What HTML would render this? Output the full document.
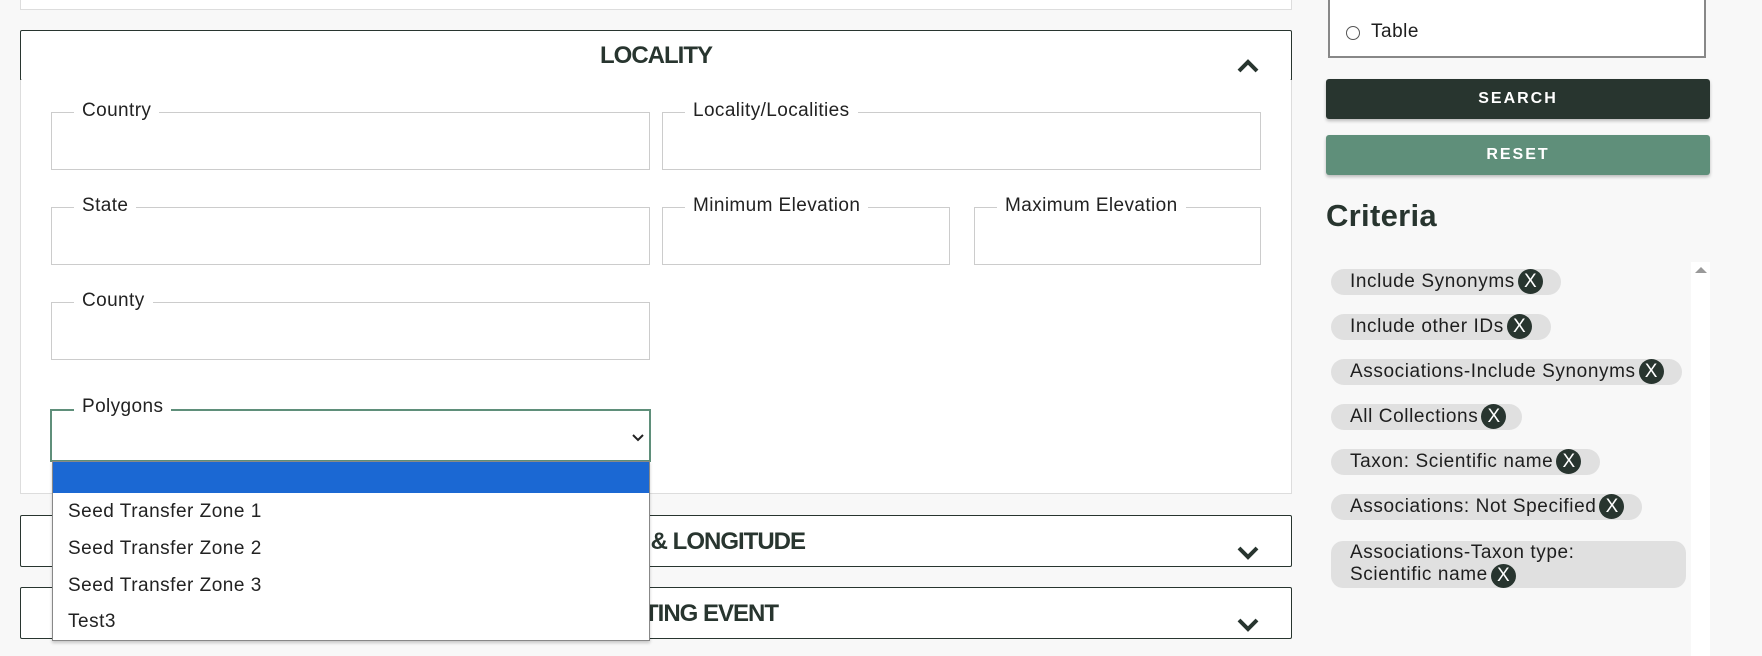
<!DOCTYPE html>
<html><head><style>
*{box-sizing:border-box;margin:0;padding:0}
body{width:1762px;height:656px;background:#f8f8f8;font-family:"Liberation Sans",sans-serif;color:#1e1e1e;position:relative;overflow:hidden}
.a{position:absolute}
.card{background:#fff;border:1px solid #ddd}
.hdr{background:#fff;border:1px solid #28352f;border-radius:2px}
.hdr .t{position:absolute;left:0;right:0;text-align:center;font-size:24px;font-weight:bold;color:#28352f;top:11px;letter-spacing:-1px}
.fs{position:absolute;border:1px solid #ccc;background:#fff}
.fs span{position:absolute;top:-13px;left:22px;background:#fff;padding:0 8px;font-size:19px;letter-spacing:0.4px;color:#222}
.chip{position:absolute;left:1331px;height:26px;background:#e0e0e0;border-radius:13px;font-size:19px;letter-spacing:0.6px;line-height:26px;padding-left:19px;color:#1e1e1e;white-space:nowrap}
.x{display:inline-block;width:25px;height:25px;border-radius:50%;background:#28352f;color:#fff;text-align:center;line-height:25px;font-size:19px;letter-spacing:0;vertical-align:top;margin-left:3px}
.btn{position:absolute;left:1326px;width:384px;height:40px;border-radius:3px;color:#fff;font-weight:bold;font-size:16px;letter-spacing:2px;text-align:center;line-height:40px;box-shadow:0 2px 3px rgba(0,0,0,.25)}
.opt{position:absolute;left:15px;font-size:19px;letter-spacing:0.5px;color:#222}
</style></head><body>
<div class="a card" style="left:20px;top:-5px;width:1272px;height:15px"></div>

<div class="a hdr" style="left:20px;top:30px;width:1272px;height:51px"><div class="t">LOCALITY</div>
<svg class="a" style="left:1216px;top:28px" width="22" height="14" viewBox="0 0 22 14"><path d="M2 12 L11 3 L20 12" stroke="#28352f" stroke-width="4" fill="none"/></svg></div>
<div class="a card" style="left:20px;top:80px;width:1272px;height:414px;border-top:none"></div>

<div class="fs" style="left:51px;top:112px;width:599px;height:58px"><span>Country</span></div>
<div class="fs" style="left:662px;top:112px;width:599px;height:58px"><span>Locality/Localities</span></div>
<div class="fs" style="left:51px;top:207px;width:599px;height:58px"><span>State</span></div>
<div class="fs" style="left:662px;top:207px;width:288px;height:58px"><span>Minimum Elevation</span></div>
<div class="fs" style="left:974px;top:207px;width:287px;height:58px"><span>Maximum Elevation</span></div>
<div class="fs" style="left:51px;top:302px;width:599px;height:58px"><span>County</span></div>
<div class="fs" style="left:50px;top:409px;width:601px;height:53px;border:2px solid #5f8f7a"><span style="top:-15px">Polygons</span>
<svg class="a" style="left:580px;top:23px" width="12" height="8" viewBox="0 0 12 8"><path d="M1 1 L6 6 L11 1" stroke="#222" stroke-width="2" fill="none"/></svg></div>

<div class="a hdr" style="left:20px;top:515px;width:1272px;height:52px"><div class="t" style="left:300px;right:auto;width:484px;text-align:right;top:12px">LATITUDE &amp; LONGITUDE</div>
<svg class="a" style="left:1216px;top:30px" width="22" height="14" viewBox="0 0 22 14"><path d="M2 2 L11 11 L20 2" stroke="#28352f" stroke-width="4" fill="none"/></svg></div>
<div class="a hdr" style="left:20px;top:587px;width:1272px;height:52px"><div class="t" style="left:300px;right:auto;width:457px;text-align:right;top:12px">COLLECTING EVENT</div>
<svg class="a" style="left:1216px;top:30px" width="22" height="14" viewBox="0 0 22 14"><path d="M2 2 L11 11 L20 2" stroke="#28352f" stroke-width="4" fill="none"/></svg></div>

<div class="a" style="left:52px;top:461px;width:598px;height:180px;background:#fff;border:1px solid #888;box-shadow:0 2px 3px rgba(0,0,0,.2)">
<div style="height:31px;background:#1b68d3"></div>
<div class="opt" style="top:39px">Seed Transfer Zone 1</div>
<div class="opt" style="top:76px">Seed Transfer Zone 2</div>
<div class="opt" style="top:113px">Seed Transfer Zone 3</div>
<div class="opt" style="top:149px">Test3</div>
</div>

<div class="a" style="left:1328px;top:-5px;width:378px;height:63px;border:2px solid #888;background:#fff"></div>
<div class="a" style="left:1346px;top:26px;width:14px;height:14px;border:1px solid #555;border-radius:50%;background:#fff"></div>
<div class="a" style="left:1371px;top:21px;font-size:19px;letter-spacing:0.5px">Table</div>

<div class="btn" style="top:79px;background:#28352f">SEARCH</div>
<div class="btn" style="top:135px;background:#5f8f7a">RESET</div>
<div class="a" style="left:1326px;top:198px;font-size:31px;font-weight:bold;letter-spacing:0.3px;color:#28352f">Criteria</div>
<div class="a" style="left:1691px;top:262px;width:19px;height:394px;background:#fff"></div>
<svg class="a" style="left:1695px;top:266px" width="12" height="8"><path d="M0 7 L6 1 L12 7Z" fill="#999"/></svg>

<div class="chip" style="top:269px;width:230px">Include Synonyms<span class="x">X</span></div>
<div class="chip" style="top:314px;width:220px">Include other IDs<span class="x">X</span></div>
<div class="chip" style="top:359px;width:351px">Associations-Include Synonyms<span class="x">X</span></div>
<div class="chip" style="top:404px;width:191px">All Collections<span class="x">X</span></div>
<div class="chip" style="top:449px;width:269px">Taxon: Scientific name<span class="x">X</span></div>
<div class="chip" style="top:494px;width:311px">Associations: Not Specified<span class="x">X</span></div>
<div class="chip" style="top:541px;width:355px;height:47px;border-radius:12px;line-height:22px;padding-top:1px;white-space:normal">Associations-Taxon type:<br>Scientific name<span class="x" style="height:24px;line-height:24px">X</span></div>
</body></html>
